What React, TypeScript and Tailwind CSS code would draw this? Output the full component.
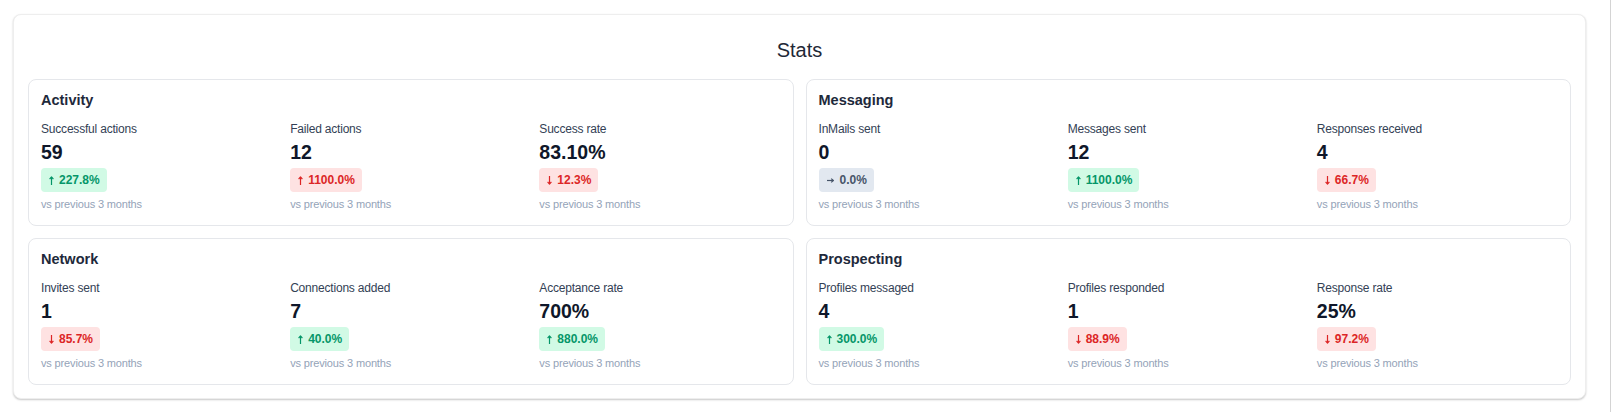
import React from "react";

type Trend = "up-good" | "up-bad" | "down-bad" | "flat";

interface Metric {
  label: string;
  value: string;
  change: string;
  trend: Trend;
}

interface Section {
  title: string;
  metrics: Metric[];
}

const sections: Section[] = [
  {
    title: "Activity",
    metrics: [
      { label: "Successful actions", value: "59", change: "227.8%", trend: "up-good" },
      { label: "Failed actions", value: "12", change: "1100.0%", trend: "up-bad" },
      { label: "Success rate", value: "83.10%", change: "12.3%", trend: "down-bad" },
    ],
  },
  {
    title: "Messaging",
    metrics: [
      { label: "InMails sent", value: "0", change: "0.0%", trend: "flat" },
      { label: "Messages sent", value: "12", change: "1100.0%", trend: "up-good" },
      { label: "Responses received", value: "4", change: "66.7%", trend: "down-bad" },
    ],
  },
  {
    title: "Network",
    metrics: [
      { label: "Invites sent", value: "1", change: "85.7%", trend: "down-bad" },
      { label: "Connections added", value: "7", change: "40.0%", trend: "up-good" },
      { label: "Acceptance rate", value: "700%", change: "880.0%", trend: "up-good" },
    ],
  },
  {
    title: "Prospecting",
    metrics: [
      { label: "Profiles messaged", value: "4", change: "300.0%", trend: "up-good" },
      { label: "Profiles responded", value: "1", change: "88.9%", trend: "down-bad" },
      { label: "Response rate", value: "25%", change: "97.2%", trend: "down-bad" },
    ],
  },
];

function UpArrow() {
  return (
    <svg className="block" width="5" height="9" viewBox="0 0 5 9" fill="none" stroke="currentColor" strokeWidth="1.2">
      <path d="M2.5 9V1.2" />
      <path d="M0.6 3.2L2.5 1L4.4 3.2" strokeLinejoin="round" />
    </svg>
  );
}

function DownArrow() {
  return (
    <svg className="block" width="5" height="9" viewBox="0 0 5 9" fill="none" stroke="currentColor" strokeWidth="1.2">
      <path d="M2.5 0V7.8" />
      <path d="M0.6 5.8L2.5 8L4.4 5.8" strokeLinejoin="round" />
    </svg>
  );
}

function RightArrow() {
  return (
    <svg className="block" width="7" height="5" viewBox="0 0 7 5" fill="none" stroke="currentColor" strokeWidth="1.2">
      <path d="M0 2.5H6" />
      <path d="M4.2 0.6L6.4 2.5L4.2 4.4" strokeLinejoin="round" />
    </svg>
  );
}

function Badge({ change, trend }: { change: string; trend: Trend }) {
  if (trend === "up-good") {
    return (
      <span className="flex h-[24px] items-center gap-[5px] rounded-[4px] bg-[#d1fae5] pl-[8px] pr-[7px] text-[12px] font-bold leading-[16px] text-[#059669]">
        <UpArrow />
        {change}
      </span>
    );
  }
  if (trend === "up-bad") {
    return (
      <span className="flex h-[24px] items-center gap-[5px] rounded-[4px] bg-[#fee2e2] pl-[8px] pr-[7px] text-[12px] font-bold leading-[16px] text-[#dc2626]">
        <UpArrow />
        {change}
      </span>
    );
  }
  if (trend === "down-bad") {
    return (
      <span className="flex h-[24px] items-center gap-[5px] rounded-[4px] bg-[#fee2e2] pl-[8px] pr-[7px] text-[12px] font-bold leading-[16px] text-[#dc2626]">
        <DownArrow />
        {change}
      </span>
    );
  }
  return (
    <span className="flex h-[24px] items-center gap-[6px] rounded-[4px] bg-[#e2e8f0] pl-[8px] pr-[7px] text-[12px] font-bold leading-[16px] text-[#475569]">
      <RightArrow />
      {change}
    </span>
  );
}

function MetricCell({ m }: { m: Metric }) {
  return (
    <div className="flex flex-col items-start">
      <div className="text-[12px] leading-[16px] tracking-[-0.2px] text-[#334155]">{m.label}</div>
      <div className="mt-[4px] text-[19.5px] font-bold leading-[23px] text-[#0f172a]">{m.value}</div>
      <div className="mt-[4px] flex h-[24px]">
        <Badge change={m.change} trend={m.trend} />
      </div>
      <div className="mt-[4px] text-[11px] leading-[16px] tracking-[-0.15px] text-[#94a3b8]">
        vs previous 3 months
      </div>
    </div>
  );
}

function SectionCard({ s }: { s: Section }) {
  return (
    <div className="rounded-[8px] border border-[#e5e7eb] bg-white px-[12px] pb-[13px] pt-[10px]">
      <div className="text-[14.5px] font-bold leading-[20px] text-[#1e293b]">{s.title}</div>
      <div className="mt-[11px] grid grid-cols-3 gap-2">
        {s.metrics.map((m) => (
          <MetricCell key={m.label} m={m} />
        ))}
      </div>
    </div>
  );
}

export default function App() {
  return (
    <div
      className="flex h-[412px] w-full bg-white"
      style={{ fontFamily: '"Liberation Sans", Arial, Helvetica, sans-serif' }}
    >
      <div className="flex-1 pl-[13px] pt-[14px]">
        <div className="w-[1573px] rounded-[8px] border border-[#eeeeee] bg-white px-[14px] pb-[13px] pt-[21px] shadow-[0_1px_2px_rgba(0,0,0,0.22)]">
          <div className="text-center text-[20px] leading-[28px] text-[#1f2937]">Stats</div>
          <div className="mt-[15px] grid grid-cols-2 gap-3">
            {sections.map((s) => (
              <SectionCard key={s.title} s={s} />
            ))}
          </div>
        </div>
      </div>
      <div className="w-px bg-[#d4d4d4]" />
    </div>
  );
}
